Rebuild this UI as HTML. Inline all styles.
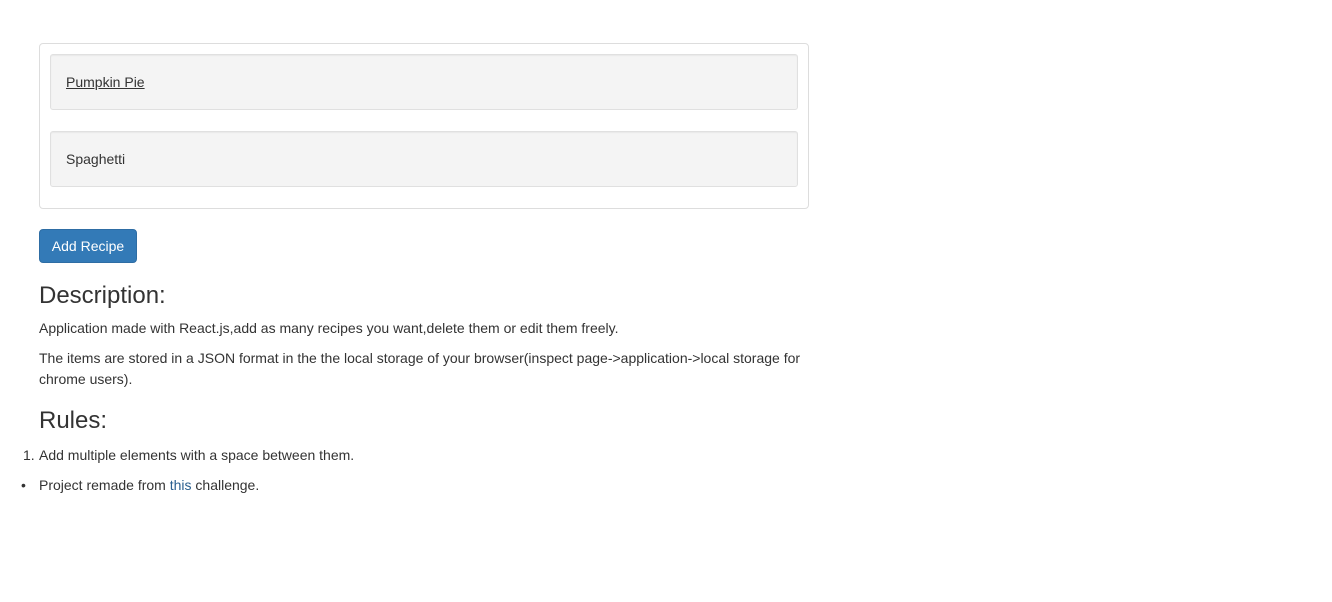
<!DOCTYPE html>
<html><head><meta charset="utf-8"><style>
body{margin:0;background:#fff;font-family:"Liberation Sans",Arial,sans-serif;font-size:14px;color:#333;}
.a{position:absolute;white-space:nowrap;line-height:20px;}
.outer{position:absolute;left:39px;top:43px;width:768px;height:164px;border:1px solid #ddd;border-radius:4px;}
.well{position:absolute;left:50px;width:746px;height:54px;background:#f4f4f4;border:1px solid #e0e0e0;border-radius:3px;box-shadow:inset 0 1px 1px rgba(0,0,0,.05);}
.btn{position:absolute;left:39px;top:229px;width:96px;height:32px;background:#337ab7;border:1px solid #2e6da4;border-radius:4px;color:#fff;line-height:32px;text-align:center;}
h3{position:absolute;margin:0;font-weight:500;font-size:24px;line-height:26px;}
</style></head><body>
<div class="outer"></div>
<div class="well" style="top:54px"></div>
<div class="well" style="top:131px"></div>
<div class="a" style="left:66px;top:72px;text-decoration:underline">Pumpkin Pie</div>
<div class="a" style="left:66px;top:149px">Spaghetti</div>
<div class="btn">Add Recipe</div>
<h3 style="left:39px;top:283px">Description:</h3>
<div class="a" style="left:39px;top:318px">Application made with React.js,add as many recipes you want,delete them or edit them freely.</div>
<div class="a" style="left:39px;top:348px">The items are stored in a JSON format in the the local storage of your browser(inspect page-&gt;application-&gt;local storage for</div>
<div class="a" style="left:39px;top:369px">chrome users).</div>
<h3 style="left:39px;top:408px">Rules:</h3>
<div class="a" style="left:23px;top:445px">1.</div>
<div class="a" style="left:39px;top:445px">Add multiple elements with a space between them.</div>
<div class="a" style="left:21px;top:475px">•</div>
<div class="a" style="left:39px;top:475px">Project remade from <span style="color:#2a5f8f">this</span> challenge.</div>
</body></html>
